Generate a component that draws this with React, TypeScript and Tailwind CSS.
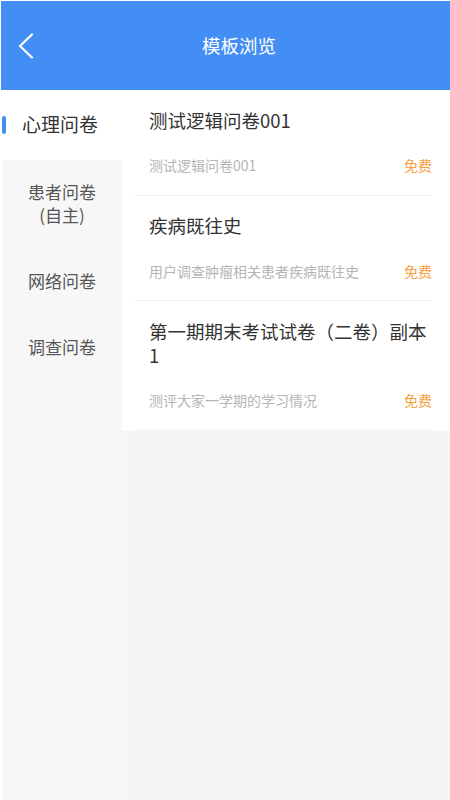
import React from 'react';

type Template = {
  title: string;
  desc: string;
  price: string;
};

const categories = ['心理问卷', '患者问卷\n(自主)', '网络问卷', '调查问卷'];

const templates: Template[] = [
  { title: '测试逻辑问卷001', desc: '测试逻辑问卷001', price: '免费' },
  { title: '疾病既往史', desc: '用户调查肿瘤相关患者疾病既往史', price: '免费' },
  { title: '第一期期末考试试卷（二卷）副本1', desc: '测评大家一学期的学习情况', price: '免费' },
];

const font = { fontFamily: '"Noto Sans CJK SC", "Noto Sans", sans-serif' };

export default function App() {
  const active = 0;

  return (
    <div className="w-[450px] h-[800px] flex flex-col bg-white overflow-hidden" style={font}>
      {/* header */}
      <div className="h-[89px] bg-[#438ef5] flex items-center ml-[1px] mt-[1px] shrink-0">
        <div className="w-[49px] h-full flex items-center pl-[16px]">
          <svg width="18" height="26" viewBox="0 0 18 26" fill="none">
            <path d="M15 1.5 L3 13 L15 24.5" stroke="white" strokeWidth="2.2" strokeLinecap="round" strokeLinejoin="round" />
          </svg>
        </div>
        <p className="flex-1 text-center text-white text-[18.5px]">模板浏览</p>
        <div className="w-[22px]" />
      </div>

      <div className="flex flex-1 min-h-0">
        {/* sidebar */}
        <div className="w-[120px] ml-[2px] bg-[#f7f7f7] flex flex-col shrink-0">
          {categories.map((c, i) =>
            i === active ? (
              <div key={c} className="relative h-[70px] bg-white flex items-center pl-[20px]">
                <span className="absolute left-0 top-[26px] w-[4px] h-[18px] rounded-full bg-[#438ef5]" />
                <span className="text-[19px] text-[#333] -mt-[2px]">{c}</span>
              </div>
            ) : (
              <div key={c} className="pt-[20px] pb-[23px] text-center text-[17px] leading-[23px] text-[#555] whitespace-pre-line">
                {c}
              </div>
            )
          )}
        </div>

        {/* list */}
        <div className="flex-1 bg-[#f5f5f5]">
          <div className="bg-white">
            {templates.map((t) => (
              <div
                key={t.title}
                className="ml-[13px] mr-[18px] pl-[14px] pt-[17.5px] pb-[20.5px] border-b border-[#f0f0f0]"
              >
                <p className="text-[18.5px] leading-[24px] text-[#333]">{t.title}</p>
                <div className="mt-[24.5px] flex items-center justify-between text-[14px] leading-[18px]">
                  <span className="text-[#b5b5b5]">{t.desc}</span>
                  <span className="text-[#f6a03e]">{t.price}</span>
                </div>
              </div>
            ))}
          </div>
        </div>
      </div>
    </div>
  );
}
